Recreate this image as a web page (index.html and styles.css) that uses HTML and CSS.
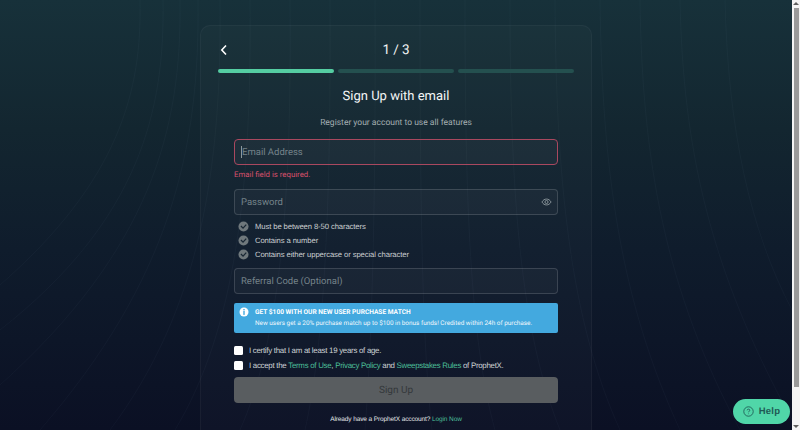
FILE: index.html
```html
<!DOCTYPE html>
<html lang="en">
<head>
<meta charset="utf-8">
<title>Sign Up with email</title>
<link rel="stylesheet" href="styles.css">
</head>
<body>
<div class="viewport">
  <div class="page">
    <svg class="bg-lines" viewBox="0 0 792 430" preserveAspectRatio="none" aria-hidden="true">
      <g fill="none" stroke="#8fb4c8" stroke-opacity="0.04" stroke-width="1">
        <path d="M140 0C142 90 120 180 0 285"/>
        <path d="M163 0C165 110 140 220 0 330"/>
        <path d="M180 0C182 130 150 250 0 385"/>
        <path d="M198 0C200 150 170 280 40 430"/>
        <path d="M220 0C222 170 200 310 110 430"/>
        <path d="M250 0C252 190 235 330 175 430"/>
        <path d="M290 0C292 200 280 340 240 430"/>
        <path d="M330 0C331 200 325 340 305 430"/>
        <path d="M375 0C376 200 372 340 365 430"/>
        <path d="M420 0C420 200 422 340 432 430"/>
        <path d="M465 0C465 200 470 340 495 430"/>
        <path d="M510 0C510 190 520 330 560 430"/>
        <path d="M555 0C556 180 570 320 620 430"/>
        <path d="M600 0C602 170 620 300 680 430"/>
        <path d="M640 0C642 160 665 290 740 430"/>
        <path d="M680 0C683 150 710 270 792 420"/>
        <path d="M725 0C728 130 750 230 792 310"/>
      </g>
    </svg>
    <main class="card">
      <header class="step-head">
        <svg class="back" viewBox="0 0 10 12" aria-hidden="true"><path d="M7 1.5 2.8 6 7 10.500"/></svg>
        <span class="step-count">1 / 3</span>
      </header>
      <div class="progress">
        <span class="bar bar-on"></span>
        <span class="bar"></span>
        <span class="bar"></span>
      </div>
      <h1 class="title">Sign Up with email</h1>
      <p class="subtitle">Register your account to use all features</p>
      <form class="form">
        <div class="field field-error"><span class="caret"></span><span class="ph">Email Address</span></div>
        <p class="error">Email field is required.</p>
        <div class="field field-pw">
          <span class="ph">Password</span>
          <svg class="eye" viewBox="0 0 12 10" aria-hidden="true"><path d="M1 5C2.300 2.800 4 1.800 6 1.800S9.700 2.800 11 5C9.700 7.200 8 8.200 6 8.200S2.300 7.200 1 5Z"/><circle cx="6" cy="5" r="1.700"/></svg>
        </div>
        <ul class="rules">
          <li><svg class="tick" viewBox="0 0 12 12" aria-hidden="true"><circle cx="6" cy="6" r="5.500"/><path d="M3.200 5.500 5.500 7.800 9 4"/></svg>Must be between 8-50 characters</li>
          <li><svg class="tick" viewBox="0 0 12 12" aria-hidden="true"><circle cx="6" cy="6" r="5.500"/><path d="M3.200 5.500 5.500 7.800 9 4"/></svg>Contains a number</li>
          <li><svg class="tick" viewBox="0 0 12 12" aria-hidden="true"><circle cx="6" cy="6" r="5.500"/><path d="M3.200 5.500 5.500 7.800 9 4"/></svg>Contains either uppercase or special character</li>
        </ul>
        <div class="field field-ref"><span class="ph">Referral Code (Optional)</span></div>
        <div class="promo">
          <svg class="info" viewBox="0 0 10 10" aria-hidden="true"><circle cx="5" cy="5" r="4.500"/><rect x="4.300" y="2" width="1.400" height="1.300"/><rect x="4.300" y="3.900" width="1.400" height="4"/></svg>
          <div class="promo-text">
            <strong class="promo-head">GET $100 WITH OUR NEW USER PURCHASE MATCH</strong>
            <span class="promo-body">New users get a 20% purchase match up to $100 in bonus funds! Credited within 24h of purchase.</span>
          </div>
        </div>
        <div class="check check-first"><span class="box"></span><span>I certify that I am at least 19 years of age.</span></div>
        <div class="check"><span class="box"></span><span>I accept the <a class="link">Terms of Use</a>, <a class="link">Privacy Policy</a> and <a class="link">Sweepstakes Rules</a> of ProphetX.</span></div>
        <div class="submit">Sign Up</div>
      </form>
      <p class="login">Already have a ProphetX acccount? <a class="link">Login Now</a></p>
    </main>
    <div class="help">
      <svg class="help-icon" viewBox="0 0 14 14" aria-hidden="true"><circle cx="7" cy="7" r="6"/><path d="M5.300 5.500C5.300 4.500 6 4 7 4S8.700 4.600 8.700 5.400C8.700 6.600 7 6.600 7 8"/><circle class="help-dot" cx="7" cy="10" r="0.600"/></svg>
      <span>Help</span>
    </div>
  </div>
  <div class="scrollbar">
    <span class="arrow arrow-up"></span>
    <span class="track"><span class="thumb"></span></span>
    <span class="arrow arrow-down"></span>
  </div>
</div>
</body>
</html>
```
FILE: styles.css
```css
* { box-sizing: border-box; }
html, body { margin: 0; height: 100%; overflow: hidden; }
body { font-family: Roboto, "Liberation Sans", sans-serif; color: #fff; text-rendering: geometricPrecision; }
.viewport { display: flex; width: 800px; height: 430px; }
.page {
  position: relative; flex: 1; min-width: 0; height: 430px; overflow: hidden;
  display: flex; justify-content: center; padding-top: 25px;
  background: linear-gradient(180deg, #17313a 0%, #132630 30%, #0f1c2c 58%, #0b1024 100%);
}
.bg-lines { position: absolute; inset: 0; width: 100%; height: 100%; }
.card {
  position: relative; width: 392px; height: 430px; flex: none;
  padding: 14px 17px 0;
  border: 1px solid rgba(255,255,255,.04); border-bottom: 0; border-radius: 10px 10px 0 0;
  background: rgba(255,255,255,.02);
}
.step-head { position: relative; height: 20px; display: flex; align-items: center; justify-content: center; }
.back { position: absolute; left: 1px; top: 4px; width: 10px; height: 12px; fill: none; stroke: #fff; stroke-width: 1.600; }
.step-count { font-size: 13.500px; line-height: 20px; letter-spacing: -.1px; color: #f2f5f5; }
.progress { display: flex; gap: 4px; margin-top: 9px; }
.bar { flex: 1; height: 4px; border-radius: 2px; background: #24504f; }
.bar-on { background: #55cda2; }
.title { margin: 14px 0 0; font-size: 13px; line-height: 20px; font-weight: 400; text-align: center; color: #f4f6f6; }
.subtitle { margin: 9px 0 0; font-size: 8.500px; line-height: 14px; text-align: center; color: #a4afb2; }
.form { width: 324px; margin: 9px auto 0; display: flex; flex-direction: column; }
.field {
  display: flex; align-items: center; height: 26px; padding: 0 6px;
  border: 1px solid rgba(255,255,255,.15); border-radius: 4px; background: rgba(255,255,255,.03);
}
.field-error { border-color: #a9485f; }
.caret { width: 1px; height: 12px; background: #8c989c; flex: none; }
.ph { font-size: 9.500px; color: #75838a; }
.field-pw { justify-content: space-between; margin-top: 8px; }
.eye { width: 11px; height: 10px; margin-right: -1px; fill: none; stroke: #98a3a7; stroke-width: .9; }
.error { margin: 4px 0 0; font-size: 7.800px; line-height: 12px; color: #d9506b; }
.rules { list-style: none; margin: 4px 0 0; padding: 0 0 0 4px; }
.rules li { display: flex; align-items: center; gap: 6px; height: 14px; font-family: "Liberation Sans", sans-serif; font-size: 7.700px; letter-spacing: -.11px; color: #c9ced0; }
.tick { width: 11px; height: 11px; flex: none; }
.tick circle { fill: #6f787c; }
.tick path { fill: none; stroke: #1a2835; stroke-width: 1.400; }
.field-ref { margin-top: 7px; }
.promo {
  display: flex; gap: 5px; height: 30px; margin-top: 9px; padding: 4px 7px 0 5px;
  border-radius: 2px; background: #43a9df;
}
.info { width: 10px; height: 10px; flex: none; }
.info circle { fill: #fff; }
.info rect { fill: #43a9df; }
.promo-text { display: flex; flex-direction: column; margin-left: 1px; }
.promo-head { font-size: 6.600px; line-height: 11px; font-weight: 700; color: #fff; }
.promo-body { font-size: 6.400px; line-height: 11px; white-space: nowrap; color: #f2f8fc; }
.check { display: flex; align-items: center; gap: 6px; height: 15px; font-family: "Liberation Sans", sans-serif; font-size: 7.900px; letter-spacing: -.28px; color: #ccd1d3; }
.check-first { margin-top: 10px; }
.box { width: 9px; height: 9px; border-radius: 1.500px; background: #fff; flex: none; }
.link { color: #4cbf98; }
.submit {
  display: flex; align-items: center; justify-content: center; height: 26px; margin-top: 4px;
  border-radius: 4px; background: #595d60; font-size: 10px; color: #34383b;
}
.login { margin: 12px 0 0; font-family: "Liberation Sans", sans-serif; font-size: 6.500px; line-height: 10px; letter-spacing: -.11px; text-align: center; color: #e6e9ea; }
.help {
  position: absolute; right: 2px; bottom: 6px; display: flex; align-items: center; justify-content: center; gap: 5px;
  width: 57px; height: 25px; border-radius: 12.500px; background: #50d6a8;
  font-family: "Liberation Sans", sans-serif; font-size: 9.500px; font-weight: 700; letter-spacing: .2px; color: #1f5a55;
}
.help-icon { width: 11px; height: 11px; fill: none; stroke: #1f5a55; stroke-width: 1.100; }
.help-dot { fill: #1f5a55; stroke: none; }
.scrollbar { width: 8px; height: 430px; display: flex; flex-direction: column; background: #f4f4f4; }
.arrow { height: 8px; flex: none; position: relative; }
.arrow::before {
  content: ""; position: absolute; left: 1px; border-left: 3px solid transparent; border-right: 3px solid transparent;
}
.arrow-up::before { top: 2px; border-bottom: 3px solid #5f5f5f; }
.arrow-down::before { bottom: 2px; border-top: 3px solid #5f5f5f; }
.track { flex: 1; padding: 0 1px 0 2px; }
.thumb { display: block; width: 5px; height: 379px; background: #9a9a9a; }
```
